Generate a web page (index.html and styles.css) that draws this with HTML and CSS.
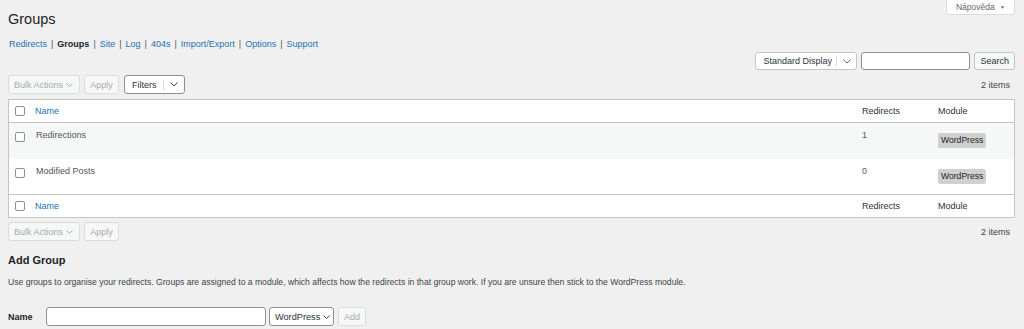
FILE: index.html
```html
<!DOCTYPE html>
<html lang="cs">
<head>
<meta charset="UTF-8">
<title>Groups</title>
<link rel="stylesheet" href="styles.css">
</head>
<body>
  <div class="top">
    <h1>Groups</h1>
    <button class="help-tab">Nápověda <span class="tri">▼</span></button>
  </div>

  <ul class="subnav">
    <li><a href="#">Redirects</a></li>
    <li class="sep">|</li>
    <li><b>Groups</b></li>
    <li class="sep">|</li>
    <li><a href="#">Site</a></li>
    <li class="sep">|</li>
    <li><a href="#">Log</a></li>
    <li class="sep">|</li>
    <li><a href="#">404s</a></li>
    <li class="sep">|</li>
    <li><a href="#">Import/Export</a></li>
    <li class="sep">|</li>
    <li><a href="#">Options</a></li>
    <li class="sep">|</li>
    <li><a href="#">Support</a></li>
  </ul>

  <div class="search-row">
    <div class="dropdown display">
      <span class="dd-label">Standard Display</span>
      <span class="dd-arrow"><svg width="8" height="5" viewBox="0 0 8 5"><polyline points="0.5,0.5 4,4 7.5,0.5" fill="none" stroke="#646970" stroke-width="1"/></svg></span>
    </div>
    <input type="text" class="search-input">
    <button class="btn">Search</button>
  </div>

  <div class="tablenav">
    <div class="actions">
      <div class="select disabled">Bulk Actions <svg width="7" height="4" viewBox="0 0 7 4"><polyline points="0.5,0.5 3.5,3.5 6.5,0.5" fill="none" stroke="#a7aaad" stroke-width="1"/></svg></div>
      <button class="btn disabled">Apply</button>
      <div class="dropdown filters">
        <span class="dd-label">Filters</span>
        <span class="dd-arrow"><svg width="8" height="5" viewBox="0 0 8 5"><polyline points="0.5,0.5 4,4 7.5,0.5" fill="none" stroke="#3c434a" stroke-width="1"/></svg></span>
      </div>
    </div>
    <span class="count">2 items</span>
  </div>

  <table class="groups">
    <thead>
      <tr>
        <th class="cb"><span class="check"></span></th>
        <th class="name"><a href="#">Name</a></th>
        <th class="redirects">Redirects</th>
        <th class="module">Module</th>
      </tr>
    </thead>
    <tbody>
      <tr class="alt">
        <td class="cb"><span class="check"></span></td>
        <td class="name">Redirections</td>
        <td class="redirects">1</td>
        <td class="module"><span class="badge">WordPress</span></td>
      </tr>
      <tr>
        <td class="cb"><span class="check"></span></td>
        <td class="name">Modified Posts</td>
        <td class="redirects">0</td>
        <td class="module"><span class="badge">WordPress</span></td>
      </tr>
    </tbody>
    <tfoot>
      <tr>
        <th class="cb"><span class="check"></span></th>
        <th class="name"><a href="#">Name</a></th>
        <th class="redirects">Redirects</th>
        <th class="module">Module</th>
      </tr>
    </tfoot>
  </table>

  <div class="tablenav bottom">
    <div class="actions">
      <div class="select disabled">Bulk Actions <svg width="7" height="4" viewBox="0 0 7 4"><polyline points="0.5,0.5 3.5,3.5 6.5,0.5" fill="none" stroke="#a7aaad" stroke-width="1"/></svg></div>
      <button class="btn disabled">Apply</button>
    </div>
    <span class="count">2 items</span>
  </div>

  <h2>Add Group</h2>
  <p class="desc">Use groups to organise your redirects. Groups are assigned to a module, which affects how the redirects in that group work. If you are unsure then stick to the WordPress module.</p>

  <div class="add-row">
    <label for="group-name">Name</label>
    <input type="text" id="group-name" class="name-input">
    <div class="select module-select">WordPress <svg width="7" height="4" viewBox="0 0 7 4"><polyline points="0.5,0.5 3.5,3.5 6.5,0.5" fill="none" stroke="#3c434a" stroke-width="1"/></svg></div>
    <button class="btn disabled">Add</button>
  </div>
</body>
</html>
```

FILE: styles.css
```css
body {
  margin: 0;
  padding: 0 9px 0 8px;
  background-color: #f0f0f1;
  color: #3c434a;
  font-family: "Liberation Sans", Arial, sans-serif;
  font-size: 9px;
}
a {
  color: #2271b1;
  text-decoration: none;
}
.top {
  display: flex;
  justify-content: space-between;
  align-items: flex-start;
  height: 37px;
}
h1 {
  margin: 0;
  padding-top: 9px;
  font-size: 14.5px;
  line-height: 20px;
  font-weight: 400;
  color: #1d2327;
}
.help-tab {
  width: 69px;
  height: 16px;
  margin-top: -1px;
  background: #fff;
  border: 1px solid #dcdcde;
  border-top: none;
  border-radius: 0 0 3px 3px;
  color: #646970;
  font-family: inherit;
  font-size: 8.5px;
  padding: 0;
}
.help-tab .tri {
  font-size: 5px;
  margin-left: 3px;
  vertical-align: 1px;
}
.subnav {
  list-style: none;
  margin: 0;
  padding: 0 0 0 1px;
  display: flex;
  gap: 4px;
  font-size: 9px;
  line-height: 14px;
  color: #50575e;
}
.subnav b {
  color: #1d2327;
}
.search-row {
  display: flex;
  justify-content: flex-end;
  gap: 4px;
  height: 18px;
  margin-top: 1px;
}
.dropdown {
  display: flex;
  align-items: center;
  box-sizing: border-box;
  height: 18px;
  background: #fff;
  border: 1px solid #8c8f94;
  border-radius: 3px;
  color: #2c3338;
  white-space: nowrap;
}
.dropdown .dd-label {
  flex: 1;
  padding-left: 7px;
}
.dropdown .dd-arrow {
  display: flex;
  align-items: center;
  justify-content: center;
  border-left: 1px solid #dcdcde;
  height: 10px;
}
.display {
  width: 102px;
  border-color: #c3c4c7;
}
.display .dd-arrow {
  width: 19px;
}
.filters {
  width: 61px;
  margin-left: 1px;
}
.filters .dd-arrow {
  width: 20px;
}
.search-input {
  box-sizing: border-box;
  width: 109px;
  height: 18px;
  margin: 0;
  border: 1px solid #8c8f94;
  border-radius: 3px;
  background: #fff;
}
.btn {
  box-sizing: border-box;
  height: 18px;
  padding: 0 5px;
  background: #f6f7f7;
  border: 1px solid #c3c4c7;
  border-radius: 3px;
  color: #2c3338;
  font-family: inherit;
  font-size: 9px;
  white-space: nowrap;
}
.btn.disabled {
  color: #a7aaad;
  border-color: #dcdcde;
}
.tablenav {
  display: flex;
  justify-content: space-between;
  align-items: center;
  height: 19px;
  margin-top: 5px;
}
.tablenav.bottom {
  margin-top: 4px;
}
.actions {
  display: flex;
  gap: 4px;
  height: 19px;
}
.actions .btn,
.actions .dropdown {
  height: 19px;
}
.select {
  display: flex;
  align-items: center;
  gap: 3px;
  box-sizing: border-box;
  height: 19px;
  padding: 0 4px 0 5px;
  border: 1px solid #8c8f94;
  border-radius: 3px;
  background: #fff;
  color: #2c3338;
  white-space: nowrap;
}
.select svg {
  flex: none;
}
.select.disabled {
  width: 72px;
  background: #f6f7f7;
  border-color: #dcdcde;
  color: #a7aaad;
}
.actions .btn.disabled {
  width: 35px;
}
.count {
  padding-right: 5px;
  color: #3c434a;
}
table.groups {
  width: 100%;
  margin-top: 5px;
  border-collapse: collapse;
  border: 1px solid #c3c4c7;
  background: #fff;
}
.groups th,
.groups td {
  padding: 0 6px;
  text-align: left;
  font-weight: 400;
  vertical-align: middle;
}
.groups thead tr,
.groups tfoot tr {
  height: 23px;
}
.groups thead tr {
  border-bottom: 1px solid #c3c4c7;
}
.groups tfoot tr {
  border-top: 1px solid #c3c4c7;
}
.groups th {
  color: #2c3338;
}
.groups th.name {
  padding-left: 4px;
}
.groups tbody tr {
  height: 36px;
}
.groups tbody td {
  vertical-align: top;
  padding-top: 7px;
  color: #50575e;
}
.groups tr.alt {
  background: #f6f7f7;
}
.groups .cb {
  width: 16px;
  padding: 0 0 0 6px;
}
.groups tbody .cb {
  padding-top: 9px;
}
.groups td.name {
  padding-left: 5px;
}
.groups .redirects {
  width: 64px;
}
.groups .module {
  width: 70px;
}
.check {
  display: block;
  box-sizing: border-box;
  width: 10px;
  height: 10px;
  border: 1px solid #8c8f94;
  border-radius: 2px;
  background: #fff;
}
.badge {
  display: inline-block;
  margin-top: 3px;
  padding: 3px 3px;
  background: #d0d0d0;
  border-radius: 2px;
  color: #1d2327;
  font-size: 8.6px;
  line-height: 9px;
}
h2 {
  margin: 12px 0 0;
  font-size: 11px;
  line-height: 14px;
  font-weight: 700;
  color: #1d2327;
}
.desc {
  margin: 9px 0 0;
  font-size: 8.6px;
  line-height: 12px;
}
.add-row {
  display: flex;
  align-items: center;
  gap: 3px;
  height: 19px;
  margin-top: 19px;
}
.add-row label {
  width: 35px;
  font-weight: 700;
  color: #1d2327;
}
.name-input {
  box-sizing: border-box;
  width: 220px;
  height: 19px;
  margin: 0;
  border: 1px solid #8c8f94;
  border-radius: 3px;
  background: #fff;
}
.module-select {
  width: 65px;
  font-size: 9.2px;
}
.add-row .btn {
  width: 28px;
  height: 19px;
  margin-left: 1px;
}
```
